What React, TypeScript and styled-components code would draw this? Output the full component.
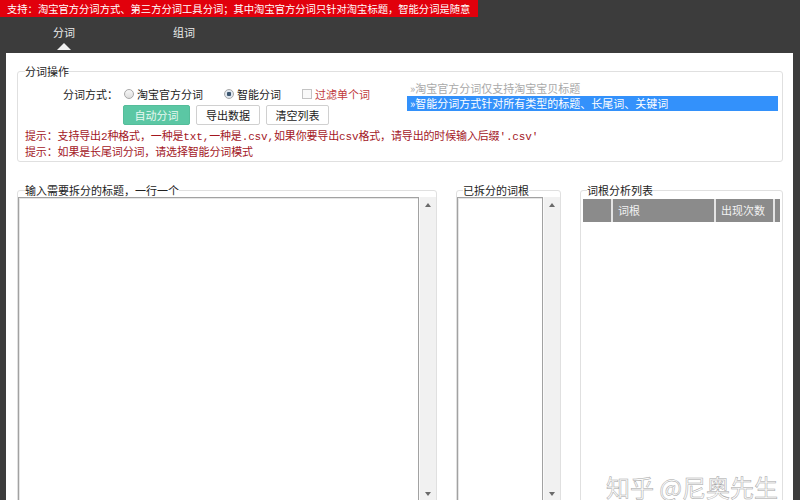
import React from 'react';
import styled, { createGlobalStyle, css } from 'styled-components';

const GlobalStyle = createGlobalStyle`
  html, body {
    margin: 0;
    padding: 0;
    background: #3c3c3c;
    overflow: hidden;
  }
  body {
    font-family: "Noto Sans CJK SC", "Liberation Sans", sans-serif;
    font-size: 11px;
    color: #222;
  }
`;

const Window = styled.div`
  position: relative;
  width: 800px;
  height: 500px;
  display: flex;
  flex-direction: column;
  overflow: hidden;
  background: #3c3c3c;
`;

const Notice = styled.div`
  flex: none;
  height: 17px;
`;

const NoticeText = styled.span`
  display: inline-block;
  box-sizing: border-box;
  width: 478px;
  height: 17px;
  line-height: 17px;
  padding-left: 7px;
  background: #e1000c;
  color: #fff;
  font-size: 10.3px;
  white-space: nowrap;
`;

const TabBar = styled.div`
  flex: none;
  height: 36px;
  display: flex;
  padding-left: 4px;
`;

const Tab = styled.div<{ $active?: boolean }>`
  position: relative;
  width: 120px;
  padding-top: 8px;
  line-height: 14px;
  text-align: center;
  color: #ececec;
  font-size: 11px;

  ${p => p.$active && css`
    &::after {
      content: '';
      position: absolute;
      left: 50%;
      bottom: 3px;
      margin-left: -7px;
      border-left: 7px solid transparent;
      border-right: 7px solid transparent;
      border-bottom: 7px solid #f2f2f2;
    }
  `}
`;

const Panel = styled.div`
  flex: 1;
  min-height: 0;
  margin: 0 7px 0 6px;
  padding: 11px 10px 0 11px;
  background: #fff;
  display: flex;
  flex-direction: column;
`;

const Group = styled.fieldset`
  margin: 0;
  min-width: 0;
  padding: 0;
  border: 1px solid #e0e0e0;
  border-radius: 3px;
  display: flex;
  flex-direction: column;
`;

const Legend = styled.legend<{ $offset: number }>`
  margin-left: ${p => p.$offset}px;
  padding: 0;
  font-size: 11px;
  line-height: 14px;
  color: #222;
`;

const OpsBody = styled.div`
  display: grid;
  grid-template-columns: 1fr 371px;
  padding: 3px 4px 0 7px;
`;

const Controls = styled.div`
  padding-top: 5px;
  display: flex;
  flex-direction: column;
  gap: 3px;
`;

const ModeRow = styled.div`
  display: flex;
  align-items: center;
  height: 16px;
  padding-left: 38px;
  gap: 21px;
`;

const ModeLabel = styled.span`
  width: 61px;
  margin-right: -21px;
  white-space: nowrap;
`;

const Option = styled.label<{ $danger?: boolean }>`
  display: flex;
  align-items: center;
  gap: 3px;
  white-space: nowrap;
  color: ${p => (p.$danger ? '#c0393b' : '#222')};
`;

const Radio = styled.span<{ $checked?: boolean }>`
  box-sizing: border-box;
  width: 10px;
  height: 10px;
  border-radius: 50%;
  border: 1px solid #a8a8a8;
  background: ${p =>
    p.$checked
      ? 'radial-gradient(circle, #3c5670 0 2px, #dfe6ee 2.5px)'
      : 'linear-gradient(#f7f7f7, #dedede)'};
`;

const Check = styled.span`
  box-sizing: border-box;
  width: 10px;
  height: 10px;
  border: 1px solid #c4c4c4;
  background: #f9f9f9;
`;

const ButtonRow = styled.div`
  display: flex;
  gap: 6px;
  padding-left: 98px;
`;

const Button = styled.button<{ $primary?: boolean; $w: number }>`
  box-sizing: border-box;
  width: ${p => p.$w}px;
  height: 20px;
  padding: 0;
  border-radius: 2px;
  font-family: inherit;
  font-size: 11px;
  cursor: pointer;
  border: 1px solid ${p => (p.$primary ? '#55bd9a' : '#d0d0d0')};
  background: ${p => (p.$primary ? '#5bc7a4' : '#fff')};
  color: ${p => (p.$primary ? '#e8f8f1' : '#222')};
`;

const TipList = styled.div`
  display: flex;
  flex-direction: column;
`;

const ListItem = styled.div<{ $selected?: boolean }>`
  height: 15px;
  line-height: 15px;
  padding-left: 3px;
  white-space: nowrap;
  color: ${p => (p.$selected ? '#fff' : '#a9a9a9')};
  background: ${p => (p.$selected ? '#3391fb' : 'transparent')};
`;

const Hints = styled.div`
  grid-column: 1 / -1;
  margin-top: 4px;
  color: #a3171f;
  font-family: "Liberation Mono", "Noto Sans CJK SC", monospace;
  font-size: 11px;
  letter-spacing: -0.15px;
  line-height: 16px;
  white-space: nowrap;
`;

const Lower = styled.div`
  flex: 1;
  min-height: 0;
  margin: 21px 0 -6px;
  display: grid;
  grid-template-columns: 420px 105px 1fr;
  column-gap: 19px;
`;

const Scroller = styled.div`
  flex: 1;
  display: flex;
  min-height: 0;
`;

const TextBox = styled.div`
  flex: 1;
  border: 1px solid #a2a2a2;
  box-shadow: inset 1px 1px 0 #e6e6e6;
  background: #fff;
`;

const ScrollTrack = styled.div`
  flex: none;
  width: 16px;
  background: #f1f1f1;
  border-left: 1px solid #fafafa;
  display: flex;
  flex-direction: column;
  justify-content: space-between;
  align-items: center;
  padding: 6px 0 9px;
`;

const TableBody = styled.div`
  flex: 1;
  padding: 2px 2px 0 2px;
`;

const HeaderRow = styled.div`
  display: grid;
  grid-template-columns: 28px 103px 59px 1fr;
  height: 23px;
  background: #8b8b8b;
`;

const HeaderCell = styled.div<{ $sep?: boolean }>`
  line-height: 23px;
  padding-left: 5px;
  color: #f2f2f2;
  white-space: nowrap;
  border-left: ${p => (p.$sep ? '2px solid #e4e4e4' : 'none')};
`;

const Watermark = styled.div`
  position: absolute;
  right: 22px;
  bottom: 1px;
  font-size: 24px;
  line-height: 24px;
  color: #fcfcfc;
  -webkit-text-stroke: 0.5px #a6a6a6;
  white-space: nowrap;
`;

const Arrow = ({ up }: { up?: boolean }) => (
  <svg width="6" height="4" viewBox="0 0 6 4">
    <path d={up ? 'M0 4 L3 0 L6 4 Z' : 'M0 0 L3 4 L6 0 Z'} fill="#6a6a6a" />
  </svg>
);

const TextArea = () => (
  <Scroller>
    <TextBox />
    <ScrollTrack>
      <Arrow up />
      <Arrow />
    </ScrollTrack>
  </Scroller>
);

export default function App() {
  return (
    <Window>
      <GlobalStyle />
      <Notice>
        <NoticeText>
          支持：淘宝官方分词方式、第三方分词工具分词；其中淘宝官方分词只针对淘宝标题，智能分词是随意
        </NoticeText>
      </Notice>
      <TabBar>
        <Tab $active>分词</Tab>
        <Tab>组词</Tab>
      </TabBar>
      <Panel>
        <Group>
          <Legend $offset={7}>分词操作</Legend>
          <OpsBody>
            <Controls>
              <ModeRow>
                <ModeLabel>分词方式：</ModeLabel>
                <Option>
                  <Radio />
                  淘宝官方分词
                </Option>
                <Option>
                  <Radio $checked />
                  智能分词
                </Option>
                <Option $danger>
                  <Check />
                  过滤单个词
                </Option>
              </ModeRow>
              <ButtonRow>
                <Button $primary $w={67}>自动分词</Button>
                <Button $w={64}>导出数据</Button>
                <Button $w={63}>清空列表</Button>
              </ButtonRow>
            </Controls>
            <TipList>
              <ListItem>»淘宝官方分词仅支持淘宝宝贝标题</ListItem>
              <ListItem $selected>»智能分词方式针对所有类型的标题、长尾词、关键词</ListItem>
            </TipList>
            <Hints>
              <div>提示：支持导出2种格式，一种是txt,一种是.csv,如果你要导出csv格式，请导出的时候输入后缀'.csv'</div>
              <div>提示：如果是长尾词分词，请选择智能分词模式</div>
            </Hints>
          </OpsBody>
        </Group>
        <Lower>
          <Group>
            <Legend $offset={7}>输入需要拆分的标题，一行一个</Legend>
            <TextArea />
          </Group>
          <Group>
            <Legend $offset={6}>已拆分的词根</Legend>
            <TextArea />
          </Group>
          <Group>
            <Legend $offset={6}>词根分析列表</Legend>
            <TableBody>
              <HeaderRow>
                <HeaderCell />
                <HeaderCell $sep>词根</HeaderCell>
                <HeaderCell $sep>出现次数</HeaderCell>
                <HeaderCell $sep />
              </HeaderRow>
            </TableBody>
          </Group>
        </Lower>
      </Panel>
      <Watermark>知乎 @尼奥先生</Watermark>
    </Window>
  );
}
